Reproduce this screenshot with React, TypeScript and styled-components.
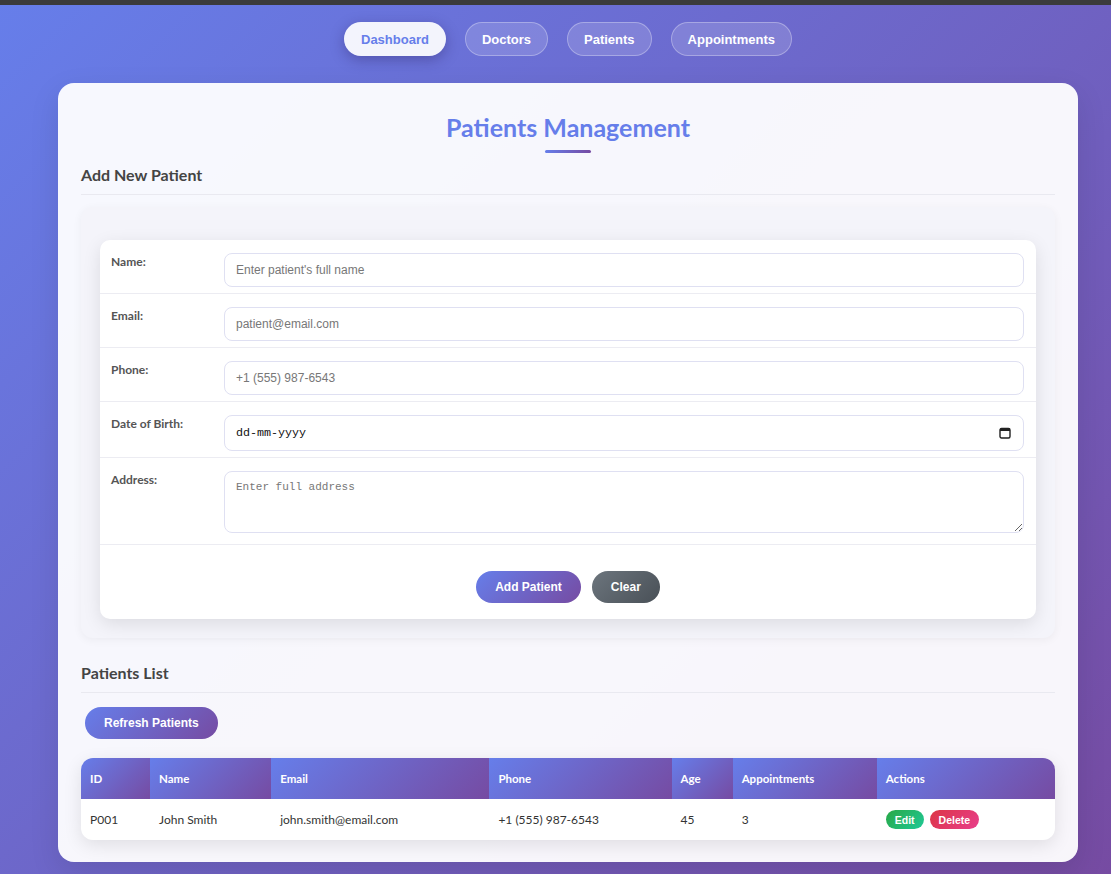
import React from "react";
import styled, { createGlobalStyle } from "styled-components";

const GlobalStyle = createGlobalStyle`
  html, body { margin: 0; padding: 0; }
  body {
    min-height: 874px;
    background: linear-gradient(135deg, #667eea 0%, #764ba2 100%);
    font-family: Lato, "Segoe UI", sans-serif;
    overflow: hidden;
  }
  * { box-sizing: border-box; }
`;

const TopStrip = styled.div`
  height: 5px;
  background: #3b3b3b;
`;

const Shell = styled.div`
  width: 1020px;
  margin-left: 58px;
`;

const Nav = styled.nav`
  display: flex;
  justify-content: center;
  gap: 19px;
  padding-top: 17px;
`;

const NavButton = styled.button<{ $active?: boolean }>`
  height: 34px;
  padding: 0 16px;
  border-radius: 17px;
  font-family: "Liberation Sans", Arial, sans-serif;
  font-weight: 700;
  font-size: 13px;
  cursor: pointer;
  border: 1px solid ${(p) => (p.$active ? "transparent" : "rgba(255,255,255,0.3)")};
  background: ${(p) => (p.$active ? "rgba(255,255,255,0.92)" : "rgba(255,255,255,0.15)")};
  color: ${(p) => (p.$active ? "#667eea" : "#ffffff")};
  box-shadow: ${(p) => (p.$active ? "0 4px 14px rgba(40,30,90,0.35)" : "none")};
`;

const Container = styled.main`
  margin-top: 27px;
  background: rgba(255, 255, 255, 0.95);
  border-radius: 16px;
  padding: 30px 23px 22px;
  box-shadow: 0 10px 30px rgba(0, 0, 0, 0.1);
`;

const Title = styled.h2`
  margin: 0;
  text-align: center;
  font-size: 25px;
  line-height: 29px;
  font-weight: 700;
  color: #667eea;
`;

const TitleBar = styled.div`
  width: 46px;
  height: 3px;
  margin: 8px auto 0;
  border-radius: 2px;
  background: linear-gradient(90deg, #667eea, #764ba2);
`;

const SectionHeading = styled.h3<{ $top: number }>`
  margin: ${(p) => p.$top}px 0 0;
  padding-bottom: 9px;
  font-size: 16px;
  line-height: 20px;
  font-weight: 700;
  color: #444;
  border-bottom: 1px solid #e9e9f0;
`;

const FormCard = styled.section`
  margin-top: 12px;
  background: #f4f4fa;
  border-radius: 12px;
  padding: 33px 19px 19px;
  box-shadow: 0 2px 10px rgba(0, 0, 0, 0.05);
`;

const FormTable = styled.div`
  background: #fff;
  border-radius: 10px;
  box-shadow: 0 5px 18px rgba(0, 0, 0, 0.1);
  overflow: hidden;
`;

const FormRow = styled.div<{ $bottom?: number }>`
  display: grid;
  grid-template-columns: 124px 1fr;
  padding: 13px 12px ${(p) => p.$bottom ?? 6}px 0;
  border-bottom: 1px solid #ececf2;
`;

const Label = styled.label`
  padding: 1px 0 0 11px;
  font-size: 12px;
  line-height: 16px;
  font-weight: 700;
  color: #555;
`;

const TextInput = styled.input`
  width: 100%;
  height: 34px;
  padding: 0 11px;
  border: 1px solid #dfe0f2;
  border-radius: 8px;
  font-family: "Liberation Sans", Arial, sans-serif;
  font-size: 12px;
  color: #333;
  outline: none;
  &::placeholder { color: #777; }
`;

const DateBox = styled.div`
  position: relative;
`;

const DateInput = styled(TextInput)`
  height: 36px;
  font-family: "Liberation Mono", monospace;
  font-size: 11.7px;
  &::placeholder { color: #111; }
`;

const CalendarIcon = styled.svg`
  position: absolute;
  right: 13px;
  top: 12px;
`;

const TextArea = styled.textarea`
  display: block;
  width: 100%;
  height: 62px;
  padding: 9px 11px;
  border: 1px solid #dfe0f2;
  border-radius: 8px;
  font-family: "Liberation Mono", monospace;
  font-size: 11px;
  color: #333;
  outline: none;
  resize: vertical;
  &::placeholder { color: #777; }
`;

const ButtonRow = styled.div`
  display: flex;
  justify-content: center;
  gap: 11px;
  padding: 26px 0 16px;
`;

const PillButton = styled.button<{ $variant?: "primary" | "grey" }>`
  height: 32px;
  padding: 0 19px;
  border: none;
  border-radius: 16px;
  font-family: "Liberation Sans", Arial, sans-serif;
  font-size: 12px;
  font-weight: 700;
  color: #fff;
  cursor: pointer;
  background: ${(p) =>
    p.$variant === "grey"
      ? "linear-gradient(135deg, #6c757d 0%, #495057 100%)"
      : "linear-gradient(135deg, #667eea 0%, #764ba2 100%)"};
`;

const RefreshWrap = styled.div`
  padding: 14px 0 19px 4px;
`;

const Table = styled.table`
  width: 100%;
  border-collapse: separate;
  border-spacing: 0;
  border-radius: 12px;
  overflow: hidden;
  background: #fff;
  box-shadow: 0 5px 18px rgba(0, 0, 0, 0.1);
  table-layout: fixed;
`;

const Th = styled.th`
  height: 41px;
  padding: 0 9px;
  text-align: left;
  font-size: 11.5px;
  font-weight: 700;
  color: #fff;
  background: linear-gradient(135deg, #667eea 0%, #764ba2 100%);
`;

const Td = styled.td`
  height: 41px;
  padding: 0 9px;
  font-size: 12px;
  color: #333;
`;

const SmallButton = styled.button<{ $kind: "edit" | "delete" }>`
  height: 19px;
  padding: 0 9px;
  margin-right: 6px;
  border: none;
  border-radius: 10px;
  font-family: "Liberation Sans", Arial, sans-serif;
  font-size: 10.5px;
  font-weight: 700;
  color: #fff;
  cursor: pointer;
  background: ${(p) =>
    p.$kind === "edit"
      ? "linear-gradient(135deg, #28a745 0%, #20c997 100%)"
      : "linear-gradient(135deg, #dc3545 0%, #e83e8c 100%)"};
`;

const columns = [
  { label: "ID", width: 69 },
  { label: "Name", width: 121 },
  { label: "Email", width: 218 },
  { label: "Phone", width: 182 },
  { label: "Age", width: 61 },
  { label: "Appointments", width: 144 },
  { label: "Actions", width: 178 },
];

export default function App() {
  return (
    <>
      <GlobalStyle />
      <TopStrip />
      <Shell>
        <Nav>
          <NavButton $active>Dashboard</NavButton>
          <NavButton>Doctors</NavButton>
          <NavButton>Patients</NavButton>
          <NavButton>Appointments</NavButton>
        </Nav>
        <Container>
          <Title>Patients Management</Title>
          <TitleBar />
          <SectionHeading $top={12}>Add New Patient</SectionHeading>
          <FormCard>
            <FormTable>
              <FormRow>
                <Label>Name:</Label>
                <TextInput placeholder="Enter patient's full name" />
              </FormRow>
              <FormRow>
                <Label>Email:</Label>
                <TextInput placeholder="patient@email.com" />
              </FormRow>
              <FormRow>
                <Label>Phone:</Label>
                <TextInput placeholder="+1 (555) 987-6543" />
              </FormRow>
              <FormRow>
                <Label>Date of Birth:</Label>
                <DateBox>
                  <DateInput placeholder="dd-mm-yyyy" />
                  <CalendarIcon width="12" height="12" viewBox="0 0 12 12">
                    <rect x="1" y="1.5" width="10" height="9.5" rx="1.5" fill="none" stroke="#222" strokeWidth="1.4" />
                    <rect x="1" y="1.5" width="10" height="2.5" fill="#222" />
                  </CalendarIcon>
                </DateBox>
              </FormRow>
              <FormRow $bottom={11}>
                <Label>Address:</Label>
                <TextArea placeholder="Enter full address" />
              </FormRow>
              <ButtonRow>
                <PillButton>Add Patient</PillButton>
                <PillButton $variant="grey">Clear</PillButton>
              </ButtonRow>
            </FormTable>
          </FormCard>
          <SectionHeading $top={25}>Patients List</SectionHeading>
          <RefreshWrap>
            <PillButton>Refresh Patients</PillButton>
          </RefreshWrap>
          <Table>
            <colgroup>
              {columns.map((c) => (
                <col key={c.label} style={{ width: c.width }} />
              ))}
            </colgroup>
            <thead>
              <tr>
                {columns.map((c) => (
                  <Th key={c.label}>{c.label}</Th>
                ))}
              </tr>
            </thead>
            <tbody>
              <tr>
                <Td>P001</Td>
                <Td>John Smith</Td>
                <Td>john.smith@email.com</Td>
                <Td>+1 (555) 987-6543</Td>
                <Td>45</Td>
                <Td>3</Td>
                <Td>
                  <SmallButton $kind="edit">Edit</SmallButton>
                  <SmallButton $kind="delete">Delete</SmallButton>
                </Td>
              </tr>
            </tbody>
          </Table>
        </Container>
      </Shell>
    </>
  );
}
